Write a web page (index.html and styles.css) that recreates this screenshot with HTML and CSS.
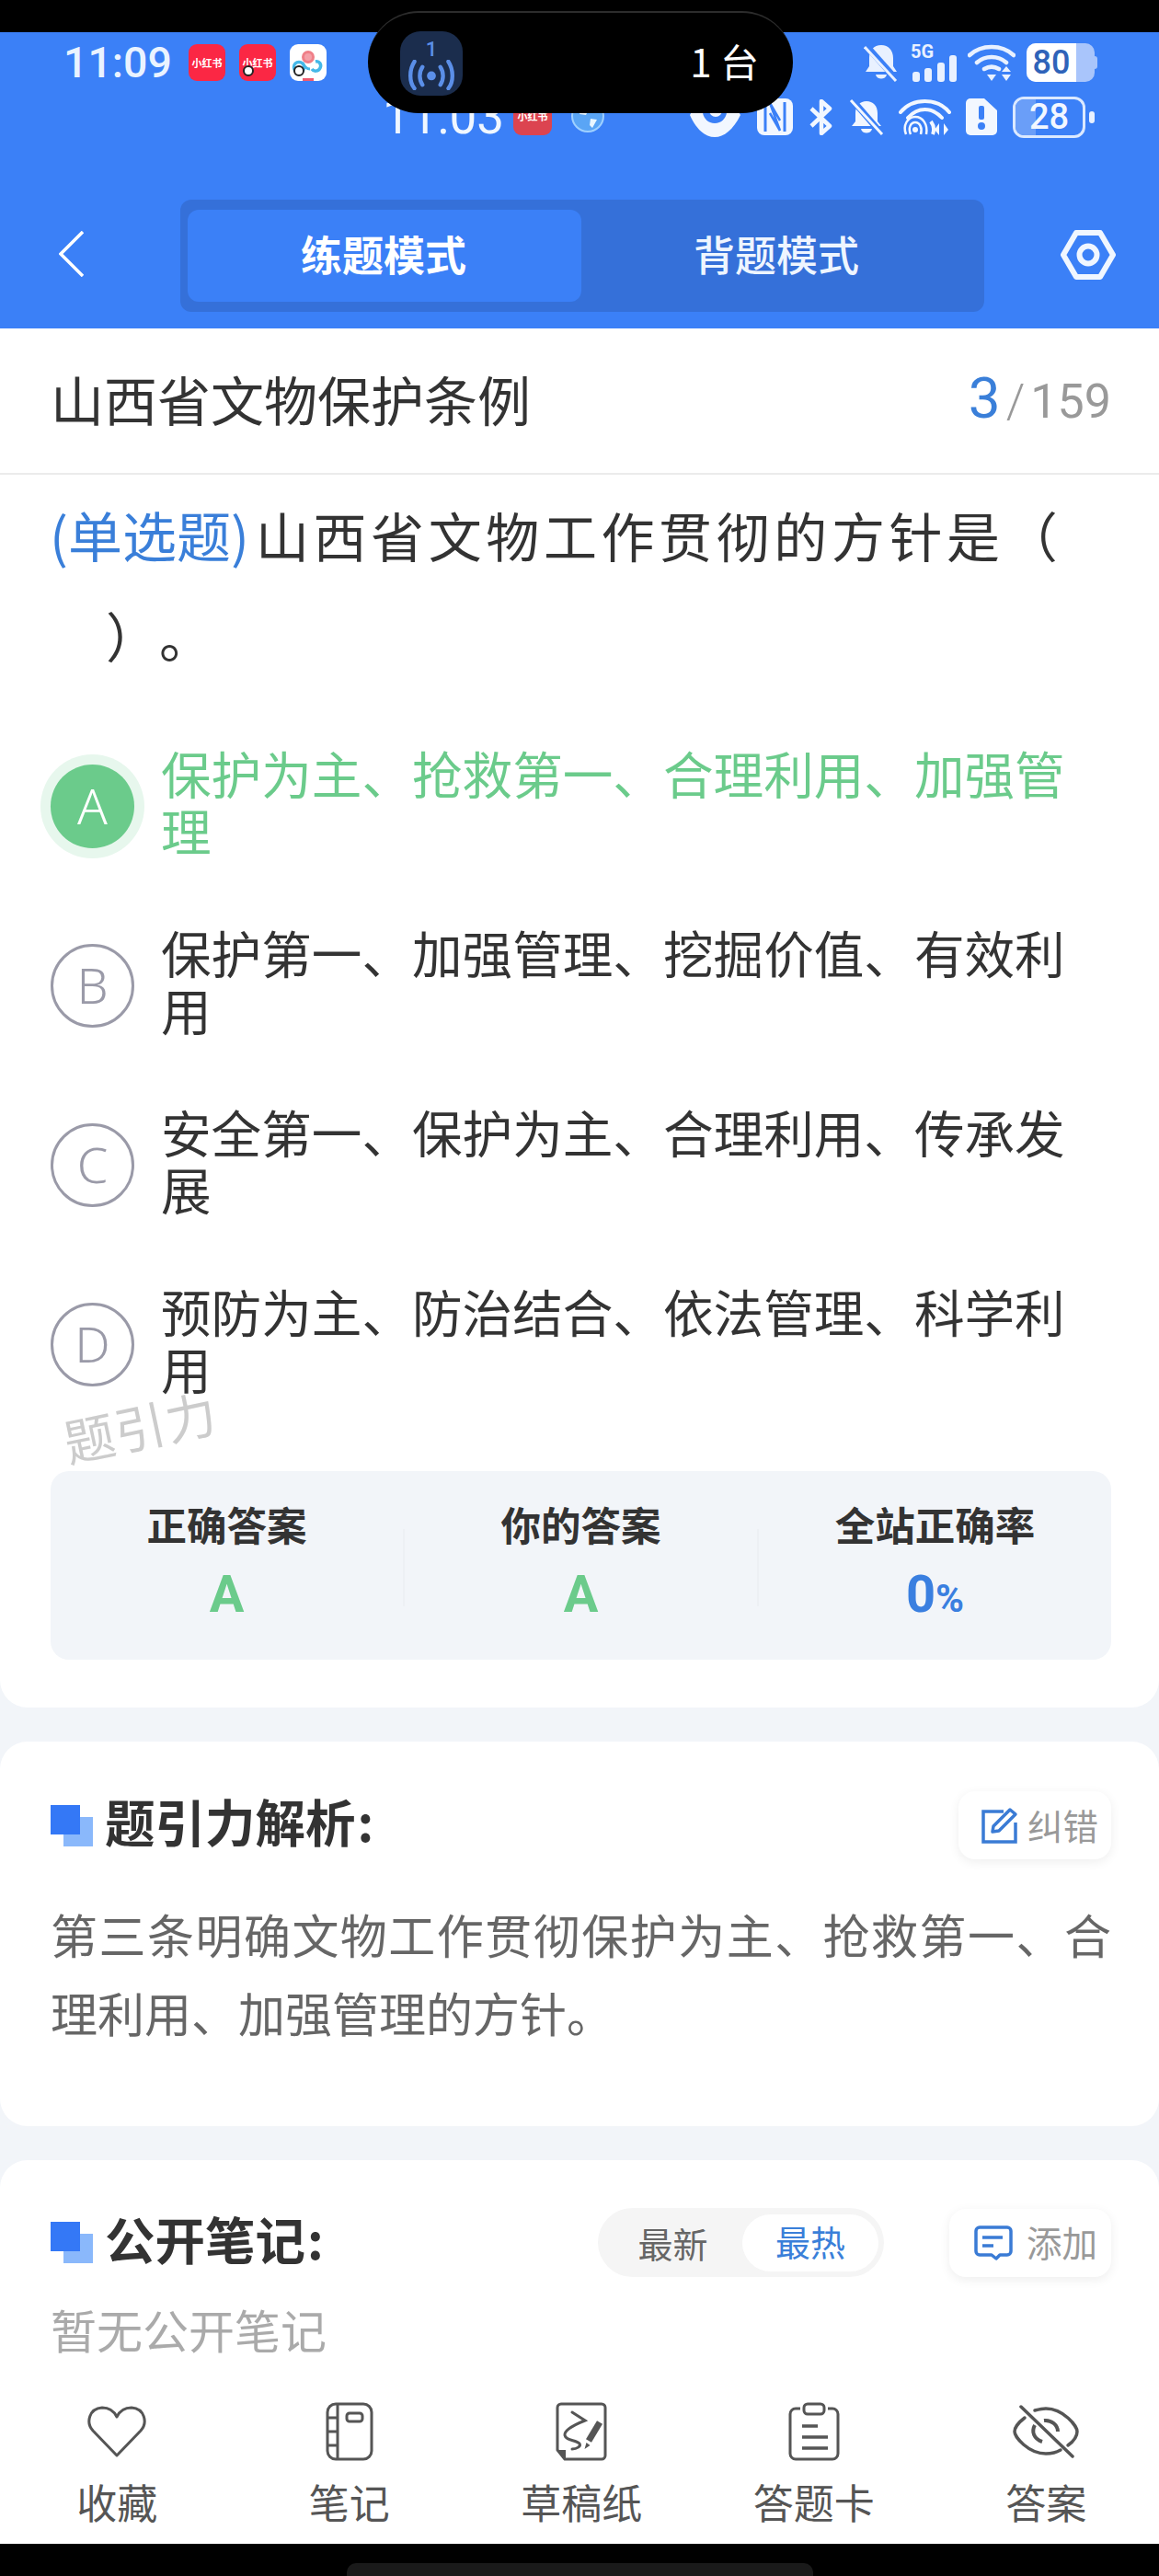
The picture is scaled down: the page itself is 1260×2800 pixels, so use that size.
FILE: index.html
```html
<!DOCTYPE html>
<html lang="zh-CN">
<head>
<meta charset="utf-8">
<title>山西省文物保护条例</title>
<link rel="stylesheet" href="styles.css">
</head>
<body>
<div class="page">
  <div class="topblack"></div>
  <header class="header">
    <div class="srow srow-main">
      <div class="sgroup">
        <span class="clock">11:09</span>
        <span class="appicons">
          <span class="app app-red">小红书</span>
          <span class="app app-red app-dot">小红书</span>
          <span class="app app-white app-dot">
            <svg viewBox="0 0 40 40" class="fill-svg"><circle cx="20" cy="14" r="5.5" fill="#f4a0a8" stroke="#ef7f88" stroke-width="3"/><circle cx="10" cy="25" r="5.5" fill="none" stroke="#45b8e8" stroke-width="3.5"/><path d="M24 27c2 3 7 3 9-1 2-4-1-8-5-7" fill="none" stroke="#45b8e8" stroke-width="3.5"/><path d="M14 20c2 5 4 7 8 7" fill="none" stroke="#45b8e8" stroke-width="3"/><rect x="14" y="37" width="12" height="3" fill="#ef5a70"/></svg>
          </span>
        </span>
      </div>
      <div class="sgroup sgroup-right">
        <svg class="i-bell" viewBox="0 0 38 41"><path d="M19 1c8 0 13 6 13 14v9l4 6H2l4-6v-9C6 7 11 1 19 1z" fill="#e9f1ff"/><path d="M13 33h12c-1 6-11 6-12 0z" fill="#e9f1ff"/><path d="M3 2l33 37" stroke="#3b80f7" stroke-width="7"/><path d="M1 3l34 37" stroke="#e9f1ff" stroke-width="3"/></svg>
        <span class="sig">
          <span class="fiveg">5G</span>
          <span class="bars"><i class="b1"></i><i class="b2"></i><i class="b3"></i><i class="b4"></i></span>
        </span>
        <svg class="i-wifi" viewBox="0 0 52 41"><path d="M2 12C15 0 37 0 50 12M10 20c9-8 23-8 32 0M18 27c5-3 11-3 16 0" fill="none" stroke="#e9f1ff" stroke-width="4.5" stroke-linecap="round"/><path d="M21 33h10l-5 7z" fill="#e9f1ff"/><path d="M42 24l5 6H37zM37 33h10l-5 7z" fill="#e9f1ff"/></svg>
        <span class="batt"><span class="batt-num">80</span><span class="batt-rest"></span><span class="batt-nub"></span></span>
      </div>
    </div>
    <div class="srow srow-ghost">
      <div class="sgroup">
        <span class="clock clock-ghost">11:03</span>
        <span class="app app-ghost">小红书</span>
        <span class="globe"><svg viewBox="0 0 42 42" class="fill-svg"><circle cx="21" cy="21" r="17" fill="#5aa5f5" stroke="#9fd0ff" stroke-width="2"/><path d="M14 10l8 4-3 6-7-1zM24 24l7 1-5 9-3-3z" fill="#e9f6ff"/></svg></span>
      </div>
      <div class="sgroup sgroup-ghost">
        <svg class="i-eye2" viewBox="0 0 57 45"><path d="M1 20C8 6 18 0 28 0s20 6 28 20c-8 16-18 24-28 24S8 36 1 20z" fill="#f2f7ff"/><circle cx="28" cy="16" r="13" fill="#3b80f7"/><circle cx="29" cy="15" r="7" fill="#f2f7ff"/></svg>
        <svg class="i-nfc" viewBox="0 0 39 40"><rect width="39" height="40" rx="8" fill="#f2f7ff"/><path d="M9 4v32M30 4v32" stroke="#3b80f7" stroke-width="3"/><path d="M14 5l11 30M14 16l11 19M14 5l11 19" stroke="#3b80f7" stroke-width="2.5"/></svg>
        <svg class="i-bt" viewBox="0 0 27 39"><path d="M3 10l20 19-9 8V2l9 8L3 29" fill="none" stroke="#f2f7ff" stroke-width="4.5" stroke-linejoin="round"/></svg>
        <svg class="i-bell2" viewBox="0 0 38 40"><path d="M19 3c7 0 12 5 12 13v9l4 5H3l4-5v-9C7 8 12 3 19 3z" fill="#f2f7ff"/><path d="M13 33h12c-1 6-11 6-12 0z" fill="#f2f7ff"/><path d="M3 1l33 38" stroke="#3b80f7" stroke-width="7"/><path d="M2 2l34 37" stroke="#f2f7ff" stroke-width="3"/></svg>
        <svg class="i-wifi2" viewBox="0 0 57 42"><path d="M2 16C15 0 42 0 55 16M10 22c11-12 26-12 37 0" fill="none" stroke="#f2f7ff" stroke-width="4" stroke-linecap="round"/><path d="M8 40C4 30 10 21 18 21s14 8 12 19M13 40c-3-7 0-13 5-13s8 6 6 13" fill="none" stroke="#f2f7ff" stroke-width="2.5"/><circle cx="18" cy="35" r="3" fill="#f2f7ff"/><path d="M35 26c3 4 4 9 2 14" fill="none" stroke="#f2f7ff" stroke-width="4"/><path d="M44 28v13l-5-6zM49 28v13l5-6z" fill="#f2f7ff"/></svg>
        <svg class="i-sim" viewBox="0 0 34 40"><path d="M5 0h15l14 13v22a5 5 0 0 1-5 5H5a5 5 0 0 1-5-5V5a5 5 0 0 1 5-5z" fill="#f2f7ff"/><rect x="14" y="8" width="6" height="15" rx="2" fill="#3b80f7"/><circle cx="17" cy="30" r="4" fill="#3b80f7"/></svg>
        <span class="batt2"><span class="batt2-box"><span class="batt2-fill"></span><span class="batt2-num">28</span></span><span class="batt2-nub"></span></span>
      </div>
    </div>
    <nav class="modebar">
      <div class="backbtn"><svg viewBox="0 0 27 50" class="i-back"><path d="M26 1L2 25l24 24" fill="none" stroke="#fff" stroke-width="3.5"/></svg></div>
      <div class="tabs">
        <div class="tab tab-on">练题模式</div>
        <div class="tab">背题模式</div>
      </div>
      <div class="setbtn"><svg viewBox="0 0 60 54" class="i-hex"><path d="M17 3h26l14 24-14 24H17L3 27z" fill="none" stroke="#f0f6ff" stroke-width="6" stroke-linejoin="round"/><circle cx="30" cy="27" r="9.5" fill="none" stroke="#f0f6ff" stroke-width="6"/></svg></div>
    </nav>
  </header>

  <div class="titlebar">
    <h1 class="title">山西省文物保护条例</h1>
    <div class="progress"><span class="p-cur">3</span><span class="p-sep">/</span><span class="p-total">159</span></div>
  </div>

  <main class="main">
    <section class="card card-q">
      <p class="question"><span class="q-tag">(单选题)</span><span class="q-body">山西省文物工作贯彻的方针是（</span><br><span class="q-rest">）。</span></p>
      <ul class="options">
        <li class="opt opt-right"><span class="badge">A</span><span class="opt-text">保护为主、抢救第一、合理利用、加强管理</span></li>
        <li class="opt"><span class="badge">B</span><span class="opt-text">保护第一、加强管理、挖掘价值、有效利用</span></li>
        <li class="opt"><span class="badge">C</span><span class="opt-text">安全第一、保护为主、合理利用、传承发展</span></li>
        <li class="opt"><span class="badge">D</span><span class="opt-text">预防为主、防治结合、依法管理、科学利用</span></li>
      </ul>
      <div class="stats">
        <div class="stat"><div class="stat-label">正确答案</div><div class="stat-val val-green">A</div></div>
        <div class="divider"></div>
        <div class="stat"><div class="stat-label">你的答案</div><div class="stat-val val-green">A</div></div>
        <div class="divider"></div>
        <div class="stat"><div class="stat-label">全站正确率</div><div class="stat-val val-blue">0<span class="pct">%</span></div></div>
      </div>
      <div class="watermark">题引力</div>
    </section>

    <section class="card card-a">
      <div class="sec-head">
        <div class="sec-title"><span class="sq"></span><span class="sec-name">题引力解析<span class="colon">:</span></span></div>
        <div class="chip chip-fix"><svg class="i-edit" viewBox="0 0 40 40"><path d="M24 5H2v33h35V17" fill="none" stroke="#3a7bd5" stroke-width="3.5"/><path d="M13 21L31 3l6 5-18 18-7 1z" fill="none" stroke="#3a7bd5" stroke-width="3.5" stroke-linejoin="round"/></svg><span class="chip-txt">纠错</span></div>
      </div>
      <p class="analysis">第三条明确文物工作贯彻保护为主、抢救第一、合理利用、加强管理的方针。</p>
    </section>

    <section class="card card-n">
      <div class="sec-head sec-head-n">
        <div class="sec-title"><span class="sq"></span><span class="sec-name">公开笔记<span class="colon">:</span></span></div>
        <div class="note-tools">
          <div class="seg"><span class="seg-item">最新</span><span class="seg-item seg-on">最热</span></div>
          <div class="chip chip-add"><svg class="i-add" viewBox="0 0 42 38"><path d="M6 2h30a4 4 0 0 1 4 4v22a4 4 0 0 1-4 4h-8l-4 4-5-4H6a4 4 0 0 1-4-4V6a4 4 0 0 1 4-4z" fill="none" stroke="#3a7bd5" stroke-width="3.5" stroke-linejoin="round"/><path d="M9 13h22M9 22h12" stroke="#3a7bd5" stroke-width="3.5"/></svg><span class="chip-txt">添加</span></div>
        </div>
      </div>
      <p class="empty">暂无公开笔记</p>
    </section>
  </main>

  <footer class="tabbar">
    <div class="nav-item"><span class="nav-ico"><svg width="64" height="56" viewBox="0 0 64 56"><path d="M32 54L6 27C-2 18 2 3 16 2c7 0 13 4 16 10 3-6 9-10 16-10 14 1 18 16 10 25z" fill="none" stroke="#555" stroke-width="3" stroke-linejoin="round"/></svg></span><span class="nav-label">收藏</span></div>
    <div class="nav-item"><span class="nav-ico"><svg width="52" height="64" viewBox="0 0 52 64"><rect x="2" y="2" width="48" height="60" rx="9" fill="none" stroke="#555" stroke-width="3"/><path d="M13 2v60M2 17h11M2 32h11M2 47h11" fill="none" stroke="#555" stroke-width="3"/><rect x="23" y="12" width="17" height="9" rx="3" fill="none" stroke="#555" stroke-width="3"/></svg></span><span class="nav-label">笔记</span></div>
    <div class="nav-item"><span class="nav-ico"><svg width="56" height="64" viewBox="0 0 56 64"><path d="M15 62H10L2 52V6a4 4 0 0 1 4-4h44a4 4 0 0 1 4 4v52a4 4 0 0 1-4 4H15z" fill="none" stroke="#555" stroke-width="3" stroke-linejoin="round"/><path d="M2 52h9v10z" fill="#555"/><path d="M18 11l14 9C22 24 9 30 10 36c1 6 12 5 16 9 2 3-3 6-8 6" fill="none" stroke="#555" stroke-width="3" stroke-linecap="round"/><path d="M48 22L36 42" stroke="#555" stroke-width="7"/><path d="M33.500 44l-2 7 6-4z" fill="#555"/></svg></span><span class="nav-label">草稿纸</span></div>
    <div class="nav-item"><span class="nav-ico"><svg width="56" height="64" viewBox="0 0 56 64"><path d="M13 7H8a6 6 0 0 0-6 6v43a6 6 0 0 0 6 6h40a6 6 0 0 0 6-6V13a6 6 0 0 0-6-6h-5" fill="none" stroke="#555" stroke-width="3"/><rect x="17" y="2" width="22" height="11" rx="4" fill="none" stroke="#555" stroke-width="3"/><path d="M15 26h17M15 38h28M15 50h28" stroke="#555" stroke-width="3.5"/></svg></span><span class="nav-label">答题卡</span></div>
    <div class="nav-item"><span class="nav-ico"><svg width="72" height="58" viewBox="0 0 72 58"><path d="M13 14C5 20 2 26 2 29c0 6 15 24 34 24 6 0 11-1 16-4M24 6c4-1 8-2 12-2 19 0 34 19 34 25 0 4-3 10-10 15" fill="none" stroke="#555" stroke-width="3.5" stroke-linecap="round"/><path d="M24 22c-4 7-1 15 8 18M34 17c8-1 15 5 15 12" fill="none" stroke="#555" stroke-width="4"/><path d="M9 2l56 54" stroke="#555" stroke-width="3.5" stroke-linecap="round"/></svg></span><span class="nav-label">答案</span></div>
  </footer>
  <div class="homebar"><span class="home-pill"></span></div>

  <div class="island">
    <span class="isl-app">
      <span class="isl-num">1</span>
      <svg class="i-cast" viewBox="0 0 52 34"><circle cx="26" cy="18" r="5" fill="#5b8fe8"/><path d="M16 8c-4 6-4 14 0 20M36 8c4 6 4 14 0 20M7 2c-6 9-6 23 0 30M45 2c6 9 6 23 0 30" fill="none" stroke="#5b8fe8" stroke-width="4.5" stroke-linecap="round"/></svg>
    </span>
    <span class="isl-txt">1 台</span>
  </div>
</div>
</body>
</html>
```

FILE: styles.css
```css
* { box-sizing: border-box; }
html, body { margin: 0; padding: 0; }
body { background: #000; font-family: "Noto Sans CJK SC", "Noto Sans", sans-serif; color: #333; }
h1, p, ul { margin: 0; padding: 0; }
ul { list-style: none; }
svg { display: block; flex: none; }
.page { position: relative; width: 1260px; height: 2800px; display: flex; flex-direction: column; overflow: hidden; background: #f2f5f9; }

/* top */
.topblack { height: 35px; background: #000; flex: none; }
.header { height: 322px; flex: none; background: #3b80f7; }
.srow { display: flex; justify-content: space-between; align-items: center; padding-right: 70px; }
.srow-main { height: 66px; padding-left: 69px; }
.srow-ghost { height: 50px; padding-left: 416px; }
.sgroup { display: flex; align-items: center; }
.clock { font: 500 46.5px/1 Roboto, sans-serif; color: #eaf3ff; width: 136px; }
.clock-ghost { font-size: 53px; font-weight: 400; width: 142px; color: #f0f7ff; margin-top: 3px; }
.appicons { display: flex; gap: 15px; }
.app { position: relative; display: flex; align-items: center; justify-content: center; width: 40px; height: 40px; border-radius: 9px; font-size: 11px; font-weight: 700; color: #fff; white-space: nowrap; }
.app-red { background: #fb2744; }
.app-white { background: #fff; }
.app-dot::after { content: ""; position: absolute; left: 4px; bottom: 5px; width: 8px; height: 8px; border-radius: 50%; background: #fff; border: 2px solid #222; }
.fill-svg { width: 100%; height: 100%; }
.app-ghost { background: #dc4450; width: 42px; height: 42px; }
.globe { width: 42px; height: 42px; margin-left: 18px; }
.i-bell { width: 38px; height: 41px; margin-right: 13px; }
.sig { position: relative; display: block; width: 50px; height: 41px; margin-right: 12px; }
.fiveg { position: absolute; left: 0; top: -2px; font: 700 20px/20px Roboto, sans-serif; color: #e9f1ff; }
.bars { position: absolute; left: 2px; right: 0; bottom: 0; display: flex; align-items: flex-end; justify-content: space-between; }
.bars i { display: block; width: 8px; background: #e9f1ff; border-radius: 3px; }
.bars .b1 { height: 11px; }
.bars .b2 { height: 15px; }
.bars .b3 { height: 21px; }
.bars .b4 { height: 29px; }
.i-wifi { width: 52px; height: 41px; margin-right: 12px; }
.batt { position: relative; display: flex; width: 74px; height: 42px; border-radius: 10px; background: #a9c5fb; }
.batt-num { width: 54px; height: 42px; background: #fff; border-radius: 10px 0 0 10px; color: #2f63b9; font: 500 36px/42px Roboto, sans-serif; text-align: center; }
.batt-nub { position: absolute; right: -3px; top: 14px; width: 4px; height: 14px; background: #a9c5fb; border-radius: 0 3px 3px 0; }
.sgroup-ghost { margin-top: 2px; }
.i-eye2 { width: 57px; height: 45px; margin-right: 17px; }
.i-nfc { width: 39px; height: 40px; margin-right: 17px; }
.i-bt { width: 27px; height: 39px; margin-right: 17px; }
.i-bell2 { width: 38px; height: 40px; margin-right: 16px; }
.i-wifi2 { width: 57px; height: 42px; margin-right: 16px; }
.i-sim { width: 34px; height: 40px; margin-right: 17px; }
.batt2 { display: flex; align-items: center; }
.batt2-box { position: relative; display: block; width: 79px; height: 45px; border: 3px solid #dbe9ff; border-radius: 12px; overflow: hidden; }
.batt2-fill { position: absolute; left: 0; top: 0; bottom: 0; width: 22px; background: #6a9ef8; }
.batt2-num { position: absolute; left: 0; right: 0; top: 0; text-align: center; font: 500 38px/39px Roboto, sans-serif; color: #f2f7ff; }
.batt2-nub { width: 6px; height: 13px; margin-left: 4px; background: #e9f1ff; border-radius: 3px; }

.modebar { display: flex; align-items: center; margin-top: 66px; height: 122px; padding: 0 47px 0 64px; }
.backbtn { width: 132px; }
.i-back { width: 27px; height: 50px; margin-top: -4px; }
.tabs { width: 874px; height: 122px; display: flex; background: #3570d9; border-radius: 12px; padding: 11px 8px; }
.tab { flex: 1; display: flex; align-items: center; justify-content: center; border-radius: 12px; font-size: 45px; color: #eef5ff; font-weight: 500; padding: 0 6px 5px 0; }
.tab-on { flex: none; width: 428px; background: #3b80f7; color: #fff; font-weight: 700; padding-right: 2px; }
.setbtn { margin-left: auto; }
.i-hex { width: 60px; height: 54px; margin-top: -2px; }

/* title */
.titlebar { flex: none; height: 159px; background: #fff; border-bottom: 2px solid #ebebeb; display: flex; align-items: center; justify-content: space-between; padding: 0 52px 6px 55px; }
.title { font-size: 58px; font-weight: 400; color: #333; line-height: 80px; }
.progress { display: flex; align-items: baseline; font-family: Roboto, sans-serif; color: #999; }
.p-cur { font-size: 62px; color: #3a7fd9; font-weight: 400; }
.p-sep { font-size: 52px; font-weight: 300; margin: 0 6px; }
.p-total { font-size: 52px; font-weight: 400; }

/* main */
.main { flex: 1; min-height: 0; display: flex; flex-direction: column; gap: 37px; }
.card { flex: none; background: #fff; border-radius: 30px; }
.card-q { position: relative; height: 1340px; border-radius: 0 0 30px 30px; padding: 10px 52px 0 54px; }
.question { font-size: 58px; line-height: 109px; color: #333; }
.q-tag { color: #3a7fd9; font-size: 59px; }
.q-body { letter-spacing: 4.6px; margin-left: 7px; }
.q-rest { margin-left: 61px; text-spacing-trim: space-all; }
.options { margin-top: 68px; margin-left: 1px; display: flex; flex-direction: column; gap: 71px; }
.opt { display: flex; align-items: center; height: 124px; font-size: 54.6px; line-height: 62px; color: #333; }
.badge { flex: none; width: 91px; height: 91px; margin: 2px 29px 0 0; border: 3px solid #9a9aa8; border-radius: 50%; display: flex; align-items: center; justify-content: center; font: 300 54px/1 "Noto Sans", sans-serif; color: #9a9aa8; padding-bottom: 3px; }
.opt-text { display: block; padding-bottom: 8px; }
.opt-right { color: #6bcb8b; }
.opt-right .badge { background: #6bcb8b; border: none; color: #fff; box-shadow: 0 0 0 11px #e7f7ed; }
.stats { margin-top: 77px; margin-left: 1px; height: 205px; border-radius: 20px; background: #f2f5f9; display: flex; padding-top: 28px; }
.stat { flex: 1; display: flex; flex-direction: column; align-items: center; }
.divider { flex: none; width: 2px; height: 84px; margin-top: 35px; background: #edf0f4; }
.stat-label { font-size: 43.5px; font-weight: 700; line-height: 60px; color: #333; }
.stat-val { margin-top: 11px; font: 700 56px/70px Roboto, sans-serif; }
.val-green { color: #6bcb8b; }
.val-blue { color: #3a7fe0; }
.pct { font-size: 42px; font-weight: 700; }
.watermark { position: absolute; left: 68px; top: 1001px; font-size: 55px; line-height: 64px; font-weight: 400; color: #cccccc; transform: rotate(-12deg); letter-spacing: 1px; }

.card-a { height: 418px; padding: 54px 52px 0 55px; }
.sec-head { display: flex; align-items: center; justify-content: space-between; height: 74px; }
.sec-title { display: flex; align-items: center; }
.sq { position: relative; display: block; width: 46px; height: 45px; margin-right: 13px; }
.sq::before { content: ""; position: absolute; right: 0; bottom: 0; width: 32px; height: 32px; background: #8ab8fb; }
.sq::after { content: ""; position: absolute; left: 0; top: 0; width: 32px; height: 32px; background: #3478f6; }
.sec-name { font-size: 54.5px; font-weight: 700; line-height: 70px; color: #333; padding-bottom: 10px; }
.colon { margin-left: 2px; }
.chip { display: flex; align-items: center; background: #fff; border-radius: 18px; box-shadow: 0 3px 12px rgba(0,0,0,.07); font-size: 38.5px; color: #999; }
.chip-txt { padding-bottom: 3px; }
.chip-fix { width: 166px; height: 74px; padding-left: 25px; gap: 10px; }
.i-edit { width: 40px; height: 40px; }
.analysis { margin-top: 39px; font-size: 51px; line-height: 85px; color: #666; text-align: justify; }

.card-n { flex: 1; min-height: 0; padding: 52px 52px 0 55px; border-radius: 30px 30px 0 0; }
.sec-head-n { height: 75px; }
.note-tools { display: flex; align-items: center; gap: 71px; }
.seg { width: 311px; height: 75px; border-radius: 38px; background: #f5f5f5; display: flex; align-items: center; padding: 0 6px; font-size: 38px; color: #666; }
.seg-item { flex: 1; text-align: center; line-height: 58px; }
.seg-on { flex: none; width: 148px; height: 62px; border-radius: 31px; background: #fff; color: #3a7fd9; }
.chip-add { width: 176px; height: 74px; padding-left: 27px; gap: 15px; }
.i-add { width: 42px; height: 38px; }
.empty { margin-top: 26px; font-size: 50px; line-height: 60px; color: #aaa; }

/* bottom */
.tabbar { flex: none; height: 198px; background: #fff; display: flex; padding: 44px 0 0 1px; }
.nav-item { flex: none; width: 252.5px; display: flex; flex-direction: column; align-items: center; }
.nav-ico { display: flex; align-items: center; justify-content: center; height: 64px; }
.nav-label { margin-top: 14px; font-size: 44px; line-height: 60px; color: #555; }
.homebar { flex: none; height: 35px; background: #000; display: flex; justify-content: center; align-items: flex-end; }
.home-pill { display: block; width: 507px; height: 14px; background: #1a1a1a; border-radius: 10px 10px 0 0; }

/* island */
.island { position: absolute; left: 400px; top: 12px; width: 462px; height: 111px; border-radius: 56px; background: #000; border-top: 2px solid #2c2c2c; display: flex; align-items: center; justify-content: space-between; padding: 0 37px 0 35px; z-index: 5; }
.isl-app { display: flex; flex-direction: column; align-items: center; width: 68px; height: 70px; background: #1b2d4d; border-radius: 22px; padding-top: 9px; }
.isl-num { font: 500 22px/22px Roboto, sans-serif; color: #5b8fe8; }
.i-cast { width: 52px; height: 33px; margin-top: 0; }
.isl-txt { font-size: 42px; line-height: 50px; color: #fff; white-space: pre; padding-bottom: 5px; }
```
